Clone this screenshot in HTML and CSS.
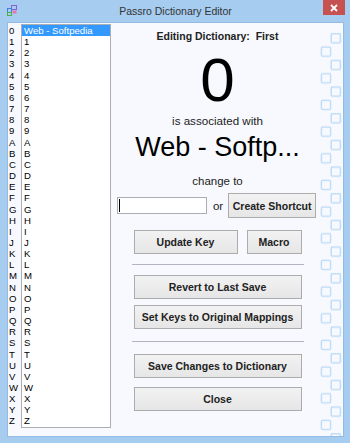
FILE: index.html
```html
<!DOCTYPE html>
<html lang="en">
  <head>
    <meta charset="UTF-8" />
    <title>Passro Dictionary Editor</title>
    <link rel="stylesheet" href="styles.css">
  </head>
  <body>
    <div class="window">
      <!-- title bar -->
      <div class="titlebar">
        <svg class="appicon" width="11" height="11" viewBox="0 0 11 11">
          <rect x="4.5" y="0.5" width="5" height="4" fill="none" stroke="#8a5fd0" />
          <rect x="0.5" y="3.5" width="4" height="4" fill="none" stroke="#3f7fe0" />
          <rect x="0.5" y="7.5" width="4" height="3" fill="none" stroke="#49b04a" />
          <rect x="5.5" y="5.5" width="4" height="3" fill="#e27ab0" />
        </svg>
        <span class="title">Passro Dictionary Editor</span>
        <span class="close">
          <svg width="8" height="8" viewBox="0 0 8 8">
            <path d="M1 1 L7 7 M7 1 L1 7" stroke="#fff" stroke-width="1.8" />
          </svg>
        </span>
      </div>

      <!-- client area -->
      <div class="client">
        <ol class="keys">
          <li>0</li><li>1</li><li>2</li><li>3</li><li>4</li><li>5</li>
          <li>6</li><li>7</li><li>8</li><li>9</li><li>A</li><li>B</li>
          <li>C</li><li>D</li><li>E</li><li>F</li><li>G</li><li>H</li>
          <li>I</li><li>J</li><li>K</li><li>L</li><li>M</li><li>N</li>
          <li>O</li><li>P</li><li>Q</li><li>R</li><li>S</li><li>T</li>
          <li>U</li><li>V</li><li>W</li><li>X</li><li>Y</li><li>Z</li>
        </ol>

        <ol class="list">
          <li class="sel">Web - Softpedia</li><li>1</li><li>2</li><li>3</li><li>4</li><li>5</li>
          <li>6</li><li>7</li><li>8</li><li>9</li><li>A</li><li>B</li>
          <li>C</li><li>D</li><li>E</li><li>F</li><li>G</li><li>H</li>
          <li>I</li><li>J</li><li>K</li><li>L</li><li>M</li><li>N</li>
          <li>O</li><li>P</li><li>Q</li><li>R</li><li>S</li><li>T</li>
          <li>U</li><li>V</li><li>W</li><li>X</li><li>Y</li><li>Z</li>
        </ol>

        <div class="panel">
          <div class="editing">Editing Dictionary:&nbsp; First</div>
          <div class="bigkey">0</div>
          <div class="assoc">is associated with</div>
          <div class="value">Web - Softp...</div>
          <div class="change">change to</div>

          <div class="shortcut-row">
            <div class="textbox"><span class="caret"></span></div>
            <span class="or">or</span>
            <button class="btn btn-shortcut">Create Shortcut</button>
          </div>

          <div class="key-row">
            <button class="btn btn-update">Update Key</button>
            <button class="btn btn-macro">Macro</button>
          </div>

          <hr class="sep" />
          <button class="btn btn-wide btn-revert">Revert to Last Save</button>
          <button class="btn btn-wide btn-setkeys">Set Keys to Original Mappings</button>
          <hr class="sep" />
          <button class="btn btn-wide btn-save">Save Changes to Dictionary</button>
          <button class="btn btn-wide btn-close">Close</button>
        </div>

        <!-- decorative squares on the right edge -->
        <svg class="deco" width="24" height="413">
          <defs>
            <pattern id="sq" patternUnits="userSpaceOnUse" x="0" y="10" width="24" height="26.667">
              <rect x="11.2" y="0.7" width="9.2" height="9.2" rx="1.2" fill="none" stroke="#c2ddf7" stroke-width="1.5" />
              <rect x="1.4" y="14" width="9.2" height="9.2" rx="1.2" fill="none" stroke="#c2ddf7" stroke-width="1.5" />
            </pattern>
          </defs>
          <rect x="0" y="10" width="24" height="403" fill="url(#sq)" />
        </svg>
      </div>
    </div>
  </body>
</html>
```

FILE: styles.css
```css
/* reset */
html,
body,
ol {
  margin: 0;
  padding: 0;
}
ol {
  list-style: none;
}

body {
  font-family: "Liberation Sans", Arial, sans-serif;
  color: #000;
}

/* window frame */
.window {
  display: flex;
  flex-direction: column;
  width: 350px;
  height: 443px;
  background-color: #a6cdf0;
}

/* title bar */
.titlebar {
  display: grid;
  grid-template-columns: 1fr auto 1fr;
  height: 22px;
}
.appicon {
  justify-self: start;
  margin: 5px 0 0 7px;
}
.title {
  font-size: 10.5px;
  line-height: 22px;
  color: #333;
  padding-left: 1px;
}
.close {
  justify-self: end;
  display: flex;
  align-items: center;
  justify-content: center;
  width: 22px;
  height: 15px;
  margin-right: 5px;
  background-color: #c75050;
}

/* client area */
.client {
  position: relative; /* deco squares sit inside */
  flex: 1;
  display: flex;
  align-items: flex-start;
  margin: 0 6px 6px 7px;
  border: 1px solid #93bbe3;
  background-color: #f7f9fe;
}

/* key letters on the left */
.keys {
  width: 12px;
  padding: 2px 0 0 1px;
  font-size: 9.6px;
  line-height: 11.15px;
}

/* list box */
.list {
  width: 88px;
  margin-top: 1px;
  border: 1px solid #abadb3;
  background-color: #fff;
  font-size: 9.6px;
  line-height: 11.15px;
}
.list li {
  padding-left: 2px;
  white-space: nowrap;
}
.list .sel {
  background-color: #3399ff;
  color: #fff;
}

/* right panel */
.panel {
  display: flex;
  flex-direction: column;
  align-items: center;
  width: 213px;
}
.editing {
  margin-top: 6px;
  font-size: 10.5px;
  font-weight: bold;
  line-height: 14px;
  color: #222;
}
.bigkey {
  margin-top: 6px;
  font-size: 62px;
  line-height: 62px;
}
.assoc {
  margin-top: 2px;
  font-size: 11.6px;
  line-height: 15px;
  color: #222;
}
.value {
  margin-top: 3px;
  font-size: 27px;
  line-height: 32px;
}
.change {
  margin-top: 11px;
  font-size: 11.5px;
  line-height: 14px;
  color: #222;
}

/* text box + create shortcut */
.shortcut-row {
  display: flex;
  align-items: center;
  margin-top: 5px;
  margin-left: -2px;
}
.textbox {
  display: flex;
  align-items: center;
  box-sizing: border-box;
  width: 90px;
  height: 17px;
  border: 1px solid #abadb3;
  background-color: #fff;
}
.caret {
  width: 1px;
  height: 13px;
  margin-left: 1px;
  background-color: #000;
}
.or {
  margin: 0 5px 0 6px;
  font-size: 11.5px;
  color: #222;
}

/* buttons */
.btn {
  box-sizing: border-box;
  height: 24px;
  padding: 0;
  border: 1px solid #acacac;
  background: linear-gradient(#f2f2f2, #e6e6e6);
  font-family: "Liberation Sans", Arial, sans-serif;
  font-size: 10.5px;
  font-weight: bold;
  color: #222;
}
.btn-shortcut {
  width: 88px;
  height: 25px;
}
.key-row {
  display: flex;
  gap: 9px;
  margin-top: 12px;
}
.btn-update {
  width: 104px;
}
.btn-macro {
  width: 55px;
}
.btn-wide {
  width: 168px;
}
.btn-revert {
  margin-top: 10px;
}
.btn-setkeys {
  margin-top: 6px;
}
.btn-save {
  margin-top: 12px;
}
.btn-close {
  margin-top: 9px;
}

/* separators */
.sep {
  width: 172px;
  height: 0;
  margin: 10px 0 0;
  border: 0;
  border-top: 1px solid #b4b4c2;
}
.btn-setkeys + .sep {
  margin-top: 12px;
}

/* decorative squares */
.deco {
  position: absolute;
  top: 0;
  left: 312px;
}
```
